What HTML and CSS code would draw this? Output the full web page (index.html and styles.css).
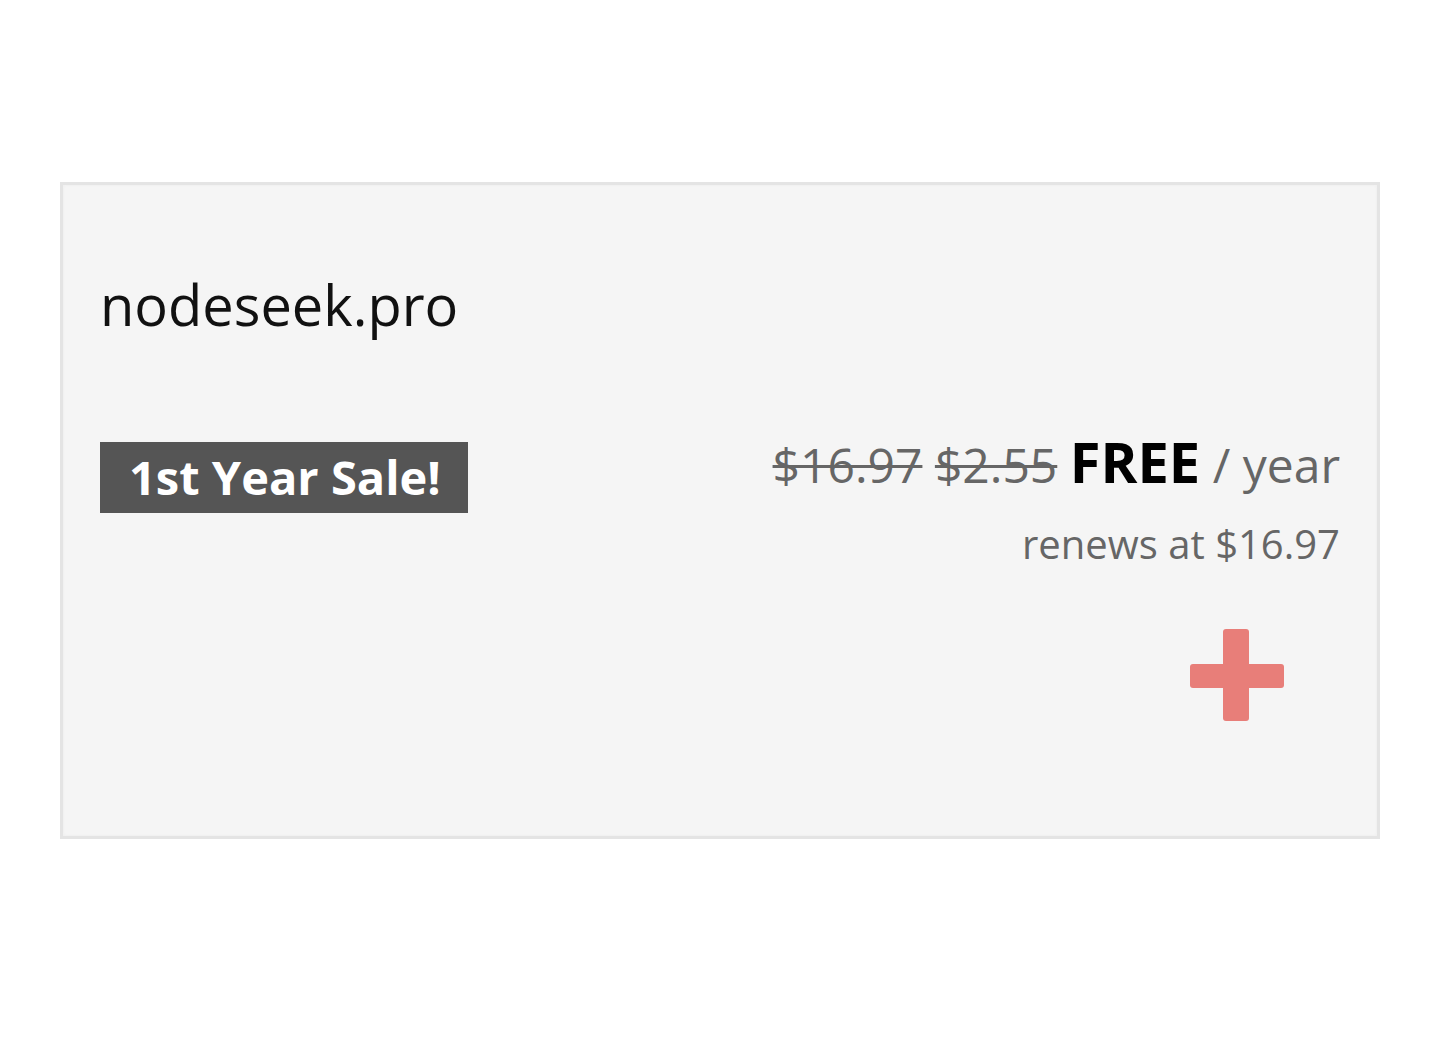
FILE: index.html
```html
<!DOCTYPE html>
<html>
<head>
<meta charset="utf-8">
<link rel="stylesheet" href="styles.css">
</head>
<body>
<div class="page">
  <div class="card">
    <div class="domain">nodeseek.pro</div>
    <div class="row">
      <div class="badge">1st Year Sale!</div>
      <div class="pricing">
        <div class="price-line">
          <span class="old">$16.97</span>
          <span class="old">$2.55</span>
          <span class="free">FREE</span>
          <span class="per">/ year</span>
        </div>
        <div class="renew">renews at $16.97</div>
        <div class="add">
          <svg width="94" height="92" viewBox="0 0 94 92" aria-hidden="true">
            <rect x="33" y="0" width="26" height="92" rx="3" fill="#e87e79"/>
            <rect x="0" y="35" width="94" height="24" rx="3" fill="#e87e79"/>
          </svg>
        </div>
      </div>
    </div>
  </div>
</div>
</body>
</html>
```

FILE: styles.css
```css
* { box-sizing: border-box; }
html, body {
  margin: 0;
  padding: 0;
  background: #ffffff;
  font-family: "Open Sans", "Noto Sans", sans-serif;
}
.page {
  padding: 182px 60px 0 60px;
  height: 1042px;
}
.card {
  background: #f5f5f5;
  border: 3px solid #e4e4e4;
  box-shadow: inset 0 0 3px #ececec;
  height: 657px;
  padding: 79px 37px 0 37px;
}
.domain {
  font-size: 56px;
  line-height: 80px;
  color: #111;
}
.row {
  display: flex;
  justify-content: space-between;
  align-items: flex-start;
  margin-top: 87px;
}
.badge {
  background: #555555;
  color: #ffffff;
  font-weight: 700;
  font-size: 47px;
  line-height: 71px;
  height: 71px;
  padding: 0 27px 0 29px;
  margin-top: 11px;
}
.pricing {
  display: flex;
  flex-direction: column;
  align-items: flex-end;
}
.price-line {
  font-size: 48px;
  line-height: 60px;
  white-space: nowrap;
}
.old {
  font-size: 48px;
  color: #666;
  text-decoration: line-through;
  text-decoration-thickness: 3px;
}
.free {
  font-size: 56px;
  font-weight: 700;
  color: #000;
}
.per {
  font-size: 48px;
  color: #666;
}
.renew {
  font-size: 40px;
  color: #666;
  line-height: 54px;
  margin-top: 22px;
}
.add {
  margin-top: 58px;
  margin-right: 56px;
  height: 92px;
}
.add svg { display: block; }
```
